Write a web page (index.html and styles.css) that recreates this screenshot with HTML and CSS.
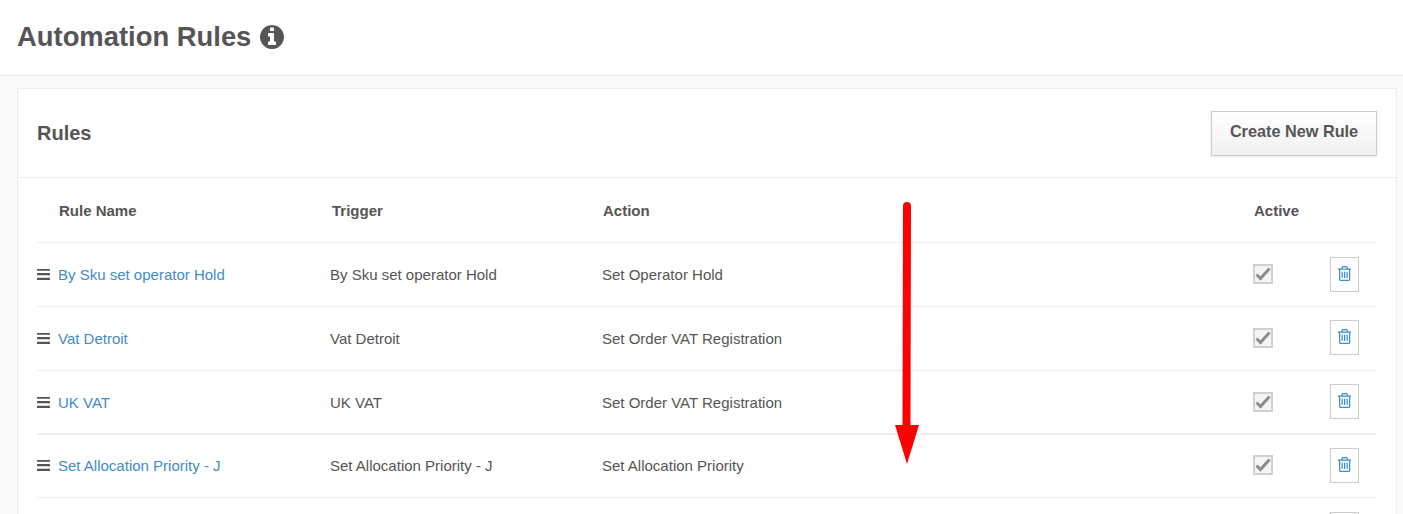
FILE: index.html
```html
<!DOCTYPE html>
<html lang="en">
<head>
    <meta charset="UTF-8">
    <title>Automation Rules</title>
    <link rel="stylesheet" href="styles.css">
</head>
<body>

<svg class="icon-defs" xmlns="http://www.w3.org/2000/svg">
    <symbol id="icon-info" viewBox="128 128 1536 1536"><path d="M1152 1376v-160q0-14-9-23t-23-9h-96v-512q0-14-9-23t-23-9h-320q-14 0-23 9t-9 23v160q0 14 9 23t23 9h96v320h-96q-14 0-23 9t-9 23v160q0 14 9 23t23 9h448q14 0 23-9t9-23zm-128-896v-160q0-14-9-23t-23-9h-192q-14 0-23 9t-9 23v160q0 14 9 23t23 9h192q14 0 23-9t9-23zm640 416q0 209-103 385.5t-279.5 279.5-385.5 103-385.5-103-279.5-279.5-103-385.5 103-385.5 279.5-279.5 385.5-103 385.5 103 279.5 279.5 103 385.5z"/></symbol>
    <symbol id="icon-bars" viewBox="128 320 1536 1216" preserveAspectRatio="none"><path d="M1664 1344v128q0 26-19 45t-45 19h-1408q-26 0-45-19t-19-45v-128q0-26 19-45t45-19h1408q26 0 45 19t19 45zm0-512v128q0 26-19 45t-45 19h-1408q-26 0-45-19t-19-45v-128q0-26 19-45t45-19h1408q26 0 45 19t19 45zm0-512v128q0 26-19 45t-45 19h-1408q-26 0-45-19t-19-45v-128q0-26 19-45t45-19h1408q26 0 45 19t19 45z"/></symbol>
    <symbol id="icon-check" viewBox="0 0 16 14"><path d="M1.5 7.5 L5.5 11.5 L14.5 1.5" fill="none" stroke="#8c8c8c" stroke-width="3"/></symbol>
    <symbol id="icon-trash" viewBox="128 128 1408 1536"><path d="M704 736v576q0 14-9 23t-23 9h-64q-14 0-23-9t-9-23v-576q0-14 9-23t23-9h64q14 0 23 9t9 23zm256 0v576q0 14-9 23t-23 9h-64q-14 0-23-9t-9-23v-576q0-14 9-23t23-9h64q14 0 23 9t9 23zm256 0v576q0 14-9 23t-23 9h-64q-14 0-23-9t-9-23v-576q0-14 9-23t23-9h64q14 0 23 9t9 23zm128 724v-948h-896v948q0 22 7 40.5t14.5 27 10.5 8.5h832q3 0 10.5-8.5t14.5-27 7-40.5zm-672-1076h448l-48-117q-7-9-17-11h-317q-10 2-17 11zm928 32v64q0 14-9 23t-23 9h-96v948q0 83-47 143.5t-113 60.5h-832q-66 0-113-58.5t-47-141.5v-952h-96q-14 0-23-9t-9-23v-64q0-14 9-23t23-9h309l70-167q15-37 54-63t79-26h320q40 0 79 26t54 63l70 167h309q14 0 23 9t9 23z"/></symbol>
</svg>

<!-- Page header -->
<div class="page-header">
    <h1>Automation Rules</h1>
    <svg class="info-icon"><use href="#icon-info"/></svg>
</div>

<div class="page-body">
    <div class="card">
        <div class="card-header">
            <h2>Rules</h2>
            <button class="create-button">Create New Rule</button>
        </div>

        <table class="rules-table">
            <thead>
                <tr>
                    <th class="col-name">Rule Name</th>
                    <th class="col-trigger">Trigger</th>
                    <th class="col-action">Action</th>
                    <th class="col-active">Active</th>
                    <th class="col-delete"></th>
                </tr>
            </thead>
            <tbody>
                <tr>
                    <td><div class="name-cell"><svg class="drag-icon"><use href="#icon-bars"/></svg><a href="#">By Sku set operator Hold</a></div></td>
                    <td>By Sku set operator Hold</td>
                    <td>Set Operator Hold</td>
                    <td><span class="check-box"><svg class="check-icon"><use href="#icon-check"/></svg></span></td>
                    <td><button class="delete-button"><svg class="trash-icon"><use href="#icon-trash"/></svg></button></td>
                </tr>
                <tr>
                    <td><div class="name-cell"><svg class="drag-icon"><use href="#icon-bars"/></svg><a href="#">Vat Detroit</a></div></td>
                    <td>Vat Detroit</td>
                    <td>Set Order VAT Registration</td>
                    <td><span class="check-box"><svg class="check-icon"><use href="#icon-check"/></svg></span></td>
                    <td><button class="delete-button"><svg class="trash-icon"><use href="#icon-trash"/></svg></button></td>
                </tr>
                <tr class="row-heavy">
                    <td><div class="name-cell"><svg class="drag-icon"><use href="#icon-bars"/></svg><a href="#">UK VAT</a></div></td>
                    <td>UK VAT</td>
                    <td>Set Order VAT Registration</td>
                    <td><span class="check-box"><svg class="check-icon"><use href="#icon-check"/></svg></span></td>
                    <td><button class="delete-button"><svg class="trash-icon"><use href="#icon-trash"/></svg></button></td>
                </tr>
                <tr class="row-short">
                    <td><div class="name-cell"><svg class="drag-icon"><use href="#icon-bars"/></svg><a href="#">Set Allocation Priority - J</a></div></td>
                    <td>Set Allocation Priority - J</td>
                    <td>Set Allocation Priority</td>
                    <td><span class="check-box"><svg class="check-icon"><use href="#icon-check"/></svg></span></td>
                    <td><button class="delete-button"><svg class="trash-icon"><use href="#icon-trash"/></svg></button></td>
                </tr>
                <tr class="row-last">
                    <td></td>
                    <td></td>
                    <td></td>
                    <td></td>
                    <td><button class="delete-button"><svg class="trash-icon"><use href="#icon-trash"/></svg></button></td>
                </tr>
            </tbody>
        </table>
    </div>
</div>

<!-- Red annotation arrow drawn over the table -->
<svg class="annotation-arrow" viewBox="0 0 24 264">
    <path d="M12 5 L11.5 226" stroke="#ff0000" stroke-width="8" stroke-linecap="round" fill="none"/>
    <path d="M0 224 H24 L12 263 Z" fill="#ff0000"/>
</svg>

</body>
</html>
```

FILE: styles.css
```css
html, body {
    height: 100%;
    overflow: hidden;
}

body {
    margin: 0;
    background-color: #fafafa;
    color: #555;
    font-family: "Liberation Sans", Arial, sans-serif;
    font-size: 15px;
}

.icon-defs {
    display: none;
}

/* Page header */
.page-header {
    display: flex;
    align-items: center;
    gap: 9px;
    height: 73px;
    padding: 0 0 2px 17px;
    background-color: #fff;
    border-bottom: 1px solid #eee;
}

.page-header h1 {
    margin: 0;
    font-size: 27.4px;
    font-weight: bold;
}

.info-icon {
    width: 24px;
    height: 24px;
    fill: #555;
}

.page-body {
    padding: 12px 6px 0 17px;
}

/* Card */
.card {
    background-color: #fff;
    border: 1px solid #eee;
}

.card-header {
    display: flex;
    justify-content: space-between;
    align-items: center;
    height: 88px;
    padding: 0 19px;
    border-bottom: 1px solid #eee;
}

.card-header h2 {
    margin: 0;
    font-size: 20px;
    font-weight: bold;
}

.create-button {
    width: 166px;
    height: 45px;
    margin-top: 1px;
    padding: 0 0 4px;
    background: linear-gradient(to bottom, #fff, #f0f0f0);
    border: 1px solid #ccc;
    box-shadow: 0 1px 2px rgba(0, 0, 0, 0.1);
    color: #555;
    font-family: inherit;
    font-size: 16.25px;
    font-weight: bold;
}

/* Rules table */
.rules-table {
    table-layout: fixed;
    width: 1339px;
    margin-left: 19px;
    border-collapse: separate;
    border-spacing: 0;
}

.rules-table th {
    height: 64px;
    padding: 0;
    border-bottom: 1px solid #eee;
    text-align: left;
    font-weight: bold;
}

.rules-table td {
    height: 63px;
    padding: 0;
    border-bottom: 1px solid #eee;
}

.rules-table .row-heavy td {
    height: 61px;
    padding-top: 1px;
    border-bottom-width: 2px;
}

.rules-table .row-short td {
    height: 60px;
    padding-bottom: 2px;
}

.col-name {
    width: 293px;
    text-indent: 22px;
}

.col-trigger {
    width: 272px;
    text-indent: 2px;
}

.col-action {
    width: 651px;
    text-indent: 1px;
}

.col-active {
    width: 77px;
    text-indent: 1px;
}

.name-cell {
    display: flex;
    align-items: center;
    gap: 8px;
}

.name-cell a {
    color: #428bca;
    text-decoration: none;
}

.drag-icon {
    width: 13px;
    height: 11px;
    fill: #555;
}

.check-box {
    display: flex;
    justify-content: center;
    align-items: center;
    box-sizing: border-box;
    width: 20px;
    height: 20px;
    margin-bottom: 1px;
    background-color: #f5f5f5;
    border: 2px solid #d0d0d0;
}

.check-icon {
    width: 16px;
    height: 14px;
}

.delete-button {
    display: flex;
    justify-content: center;
    align-items: center;
    box-sizing: border-box;
    width: 29px;
    height: 35px;
    margin-bottom: 2px;
    padding: 0 2px 2px 0;
    background-color: #fff;
    border: 1px solid #ccc;
}

tr:first-child .delete-button,
.row-last .delete-button,
.row-short .delete-button {
    margin-bottom: 0;
}

.trash-icon {
    width: 14px;
    height: 15px;
    fill: #428bca;
}

/* Annotation */
.annotation-arrow {
    position: absolute;
    left: 895px;
    top: 201px;
    width: 24px;
    height: 264px;
}
```
